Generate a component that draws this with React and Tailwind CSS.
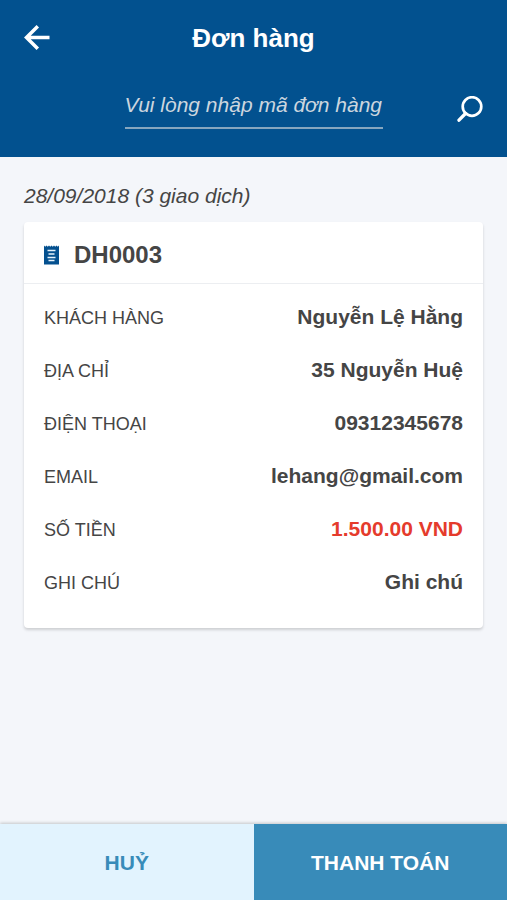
const details = [
  { label: 'KHÁCH HÀNG', value: 'Nguyễn Lệ Hằng' },
  { label: 'ĐỊA CHỈ', value: '35 Nguyễn Huệ' },
  { label: 'ĐIỆN THOẠI', value: '09312345678' },
  { label: 'EMAIL', value: 'lehang@gmail.com' },
  { label: 'SỐ TIỀN', value: '1.500.00 VND', highlight: true },
  { label: 'GHI CHÚ', value: 'Ghi chú' },
];

function BackIcon() {
  return (
    <svg width="26" height="26" viewBox="0 0 26 26" fill="none" stroke="currentColor" strokeWidth="3.5" aria-hidden="true">
      <path d="M25.5 12.5H3M13.8 1.3 2.5 12.5l11.3 11.2" />
    </svg>
  );
}

function SearchIcon() {
  return (
    <svg width="26" height="26" viewBox="0 0 26 26" fill="none" stroke="currentColor" aria-hidden="true">
      <circle cx="15" cy="10.5" r="9.3" strokeWidth="2.7" />
      <path d="M8.5 17.5 2 24.2" strokeWidth="3.3" strokeLinecap="round" />
    </svg>
  );
}

function ReceiptIcon() {
  return (
    <svg width="15" height="20" viewBox="0 0 15 20" aria-hidden="true">
      <path fill="#04508f" d="M0 .5 1.25 1.7 2.5.5l1.25 1.2L5 .5l1.25 1.2L7.5.5l1.25 1.2L10 .5l1.25 1.2L12.5.5l1.25 1.2L15 .5v19H0z" />
      <path stroke="#e6f2fb" strokeWidth="1.7" d="M3.5 5.5h8M4.5 9h6M3.5 12.5h8M4.5 15.5h6" />
    </svg>
  );
}

export default function App() {
  return (
    <div className="flex min-h-screen flex-col bg-[#f4f6fa] font-['Liberation_Sans',Arial,sans-serif] text-[#454545]">
      <header className="bg-[#02518f] px-6 pb-7 text-white">
        <div className="grid h-[76px] grid-cols-[26px_1fr_26px] items-center">
          <button type="button" aria-label="Quay lại">
            <BackIcon />
          </button>
          <h1 className="text-center text-[26px] font-bold">Đơn hàng</h1>
        </div>
        <form className="grid h-[53px] grid-cols-[26px_1fr_26px] items-center" onSubmit={(e) => e.preventDefault()}>
          <input
            type="text"
            aria-label="Mã đơn hàng"
            placeholder="Vui lòng nhập mã đơn hàng"
            className="col-start-2 mx-auto h-full w-[258px] border-b-2 border-[#86a6bf] bg-transparent pt-1.5 text-[21px] italic outline-none placeholder:text-[#ccd6df] placeholder:opacity-100"
          />
          <button type="submit" aria-label="Tìm kiếm" className="pt-3">
            <SearchIcon />
          </button>
        </form>
      </header>

      <main className="flex-1 px-6 pt-6">
        <p className="h-[41px] text-[21px] leading-[30px] italic">28/09/2018 (3 giao dịch)</p>
        <article className="rounded-[4px] bg-white pb-5 shadow-[0_2px_3px_rgba(0,0,0,0.16)]">
          <div className="flex h-[62px] items-center gap-[15px] border-b border-[#eceef1] px-5 pt-1">
            <ReceiptIcon />
            <h2 className="text-2xl font-bold">DH0003</h2>
          </div>
          <dl className="px-5 pt-1.5">
            {details.map(({ label, value, highlight }) => (
              <div key={label} className="flex h-[53px] items-center justify-between">
                <dt className="pt-0.5 text-lg">{label}</dt>
                <dd className={highlight ? 'text-[21px] font-bold text-[#e53b2c]' : 'text-[21px] font-bold'}>{value}</dd>
              </div>
            ))}
          </dl>
        </article>
      </main>

      <footer className="grid h-[76px] grid-cols-2 text-[21px] font-bold shadow-[0_-1px_3px_rgba(0,0,0,0.2)]">
        <button type="button" className="bg-[#e2f3fe] pt-0.5 text-[#388bb9]">HUỶ</button>
        <button type="button" className="bg-[#388bb9] pt-0.5 text-white">THANH TOÁN</button>
      </footer>
    </div>
  );
}
